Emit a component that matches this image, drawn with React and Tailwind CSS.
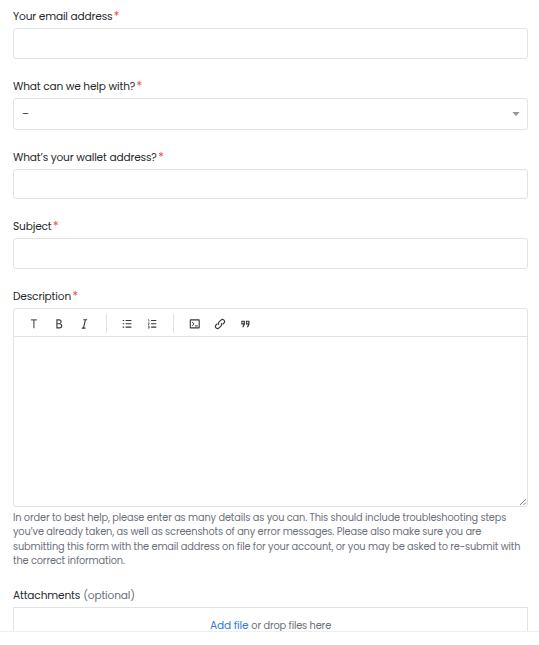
import React from "react";

function Label({ children, note }) {
  return (
    <div className="flex h-4 items-baseline whitespace-pre text-[10.6px] leading-[17px] tracking-[-0.16px] text-[#25282d]">
      <span>{children}</span>
      {note ? (
        <span className="ml-[3px] text-[#686d78]">{note}</span>
      ) : (
        <span className="ml-[1.4px] text-[11.5px] leading-4 text-[#ee4b3e]">*</span>
      )}
    </div>
  );
}

function ToolButton({ label, children }) {
  return (
    <button type="button" aria-label={label} className="flex h-6 w-[25.4px] shrink-0 items-center justify-center">
      <svg width="12" height="12" viewBox="0 0 12 12" fill="none" stroke="#35383d" strokeWidth="1.1">
        {children}
      </svg>
    </button>
  );
}

function Toolbar() {
  return (
    <div className="flex h-[28px] items-center border-b border-[#e0e2e4] pl-[7px] pt-[2px]">
      <ToolButton label="Text style">
        <path d="M2.9 1.9h6M5.9 1.9v8.3" strokeWidth="1" />
      </ToolButton>
      <ToolButton label="Bold">
        <path d="M3.9 1.9v8h2.7a2.1 2.1 0 0 0 0-4.2H3.9h2.3a1.9 1.9 0 0 0 0-3.8z" />
      </ToolButton>
      <ToolButton label="Italic">
        <path d="M5.4 1.8h3.7M3.8 10.1h3.7M7.4 1.8 5.5 10.1" />
      </ToolButton>
      <div className="ml-[9px] mr-[7px] h-[19px] w-px shrink-0 bg-[#e0e2e4]" />
      <ToolButton label="Bulleted list">
        <path d="M4.6 2.5h5.8M4.6 5.8h5.8M4.6 9.1h5.8M1.7 2.5h1.5M1.7 5.8h1.5M1.7 9.1h1.5" />
      </ToolButton>
      <ToolButton label="Numbered list">
        <path d="M5.1 2.5h5.2M5.1 5.8h5.2M5.1 9.1h5.2" />
        <path d="M2.1 1.7h.8v2M1.9 4.9h1.3v.7l-1.2 1h1.3M1.9 8.1h1.3v2H1.9M2.3 9.1h.9" strokeWidth="0.65" />
      </ToolButton>
      <div className="ml-[8px] mr-[8px] h-[19px] w-px shrink-0 bg-[#e0e2e4]" />
      <ToolButton label="Code block">
        <rect x="1.3" y="1.9" width="8.9" height="8" rx="0.3" />
        <path d="m3 3.9 2 2-2 2M5.8 7.9h3" strokeWidth="1" />
      </ToolButton>
      <ToolButton label="Link">
        <g transform="rotate(-45 6 6)">
          <path d="M7.3 6.2a2.1 2.1 0 0 1-2.1 1.9H2.5a2.1 2.1 0 0 1 0-4.2h1.8M4.7 5.8a2.1 2.1 0 0 1 2.1-1.9h2.7a2.1 2.1 0 0 1 0 4.2H7.7" />
        </g>
      </ToolButton>
      <ToolButton label="Quote">
        <g fill="#35383d" stroke="none">
          <path fillRule="evenodd" d="M2.3 2.7h3.6v3.7L4.5 9.2H3.2l1.2-2.7H2.3zM3.4 3.8v1.5h1.3V3.8z" />
          <path fillRule="evenodd" d="M6.9 2.7h3.6v3.7L9.1 9.2H7.8l1.2-2.7H6.9zM8 3.8v1.5h1.3V3.8z" />
        </g>
      </ToolButton>
    </div>
  );
}

export default function App() {
  return (
    <div className="h-[645px] w-[539px] overflow-hidden bg-white font-['Poppins','Inter',sans-serif] [font-feature-settings:'cv11']">
      <form className="h-[632px] overflow-hidden border-b border-[#eeeff0] pl-[13px] pr-[11px] pt-[8px]">
        <Label>Your email address</Label>
        <div className="mt-[4px] h-[31px] rounded-[3px] border border-[#e0e2e4]" />

        <div className="mt-[19px]">
          <Label>What can we help with?</Label>
        </div>
        <div className="mt-[4px] flex h-[32px] items-center justify-between rounded-[3px] border border-[#e0e2e4] pl-[8px] pr-[7.5px] text-[10.3px] text-[#35383d]">
          <span>–</span>
          <svg width="8" height="4" viewBox="0 0 8 4" fill="#92969b">
            <path d="M0.3 0h7.4L4 4z" />
          </svg>
        </div>

        <div className="mt-[19px]">
          <Label>What’s your wallet address?</Label>
        </div>
        <div className="mt-[4px] h-[30px] rounded-[3px] border border-[#e0e2e4]" />

        <div className="mt-[19px]">
          <Label>Subject</Label>
        </div>
        <div className="mt-[4px] h-[31px] rounded-[3px] border border-[#e0e2e4]" />

        <div className="mt-[19px]">
          <Label>Description</Label>
        </div>
        <div className="mt-[4px] flex h-[199px] flex-col rounded-[3px] border border-[#e0e2e4]">
          <Toolbar />
          <div className="flex flex-1 items-end justify-end">
            <svg width="8" height="8" viewBox="0 0 8 8" stroke="#777" strokeWidth="0.9">
              <path d="m1 7 6-6M4.5 7 7 4.5" />
            </svg>
          </div>
        </div>

        <div className="mt-[4px] h-[57px] whitespace-pre text-[9.8px] leading-[14.25px] tracking-[-0.145px] text-[#6c707b]">
          <div>In order to best help, please enter as many details as you can. This should include troubleshooting steps</div>
          <div>you’ve already taken, as well as screenshots of any error messages. Please also make sure you are</div>
          <div>submitting this form with the email address on file for your account, or you may be asked to re-submit with</div>
          <div>the correct information.</div>
        </div>

        <div className="mt-[19px]">
          <Label note="(optional)">Attachments</Label>
        </div>
        <div className="mt-[4px] flex h-[38px] items-baseline justify-center whitespace-pre border border-[#e0e2e4] pt-[10px] text-[9.8px] leading-4 tracking-[-0.14px] text-[#686d78]">
          <span className="text-[10.6px] text-[#2f7ad6]">Add file</span>
          <span className="ml-[3px]">or drop files here</span>
        </div>
      </form>
    </div>
  );
}
